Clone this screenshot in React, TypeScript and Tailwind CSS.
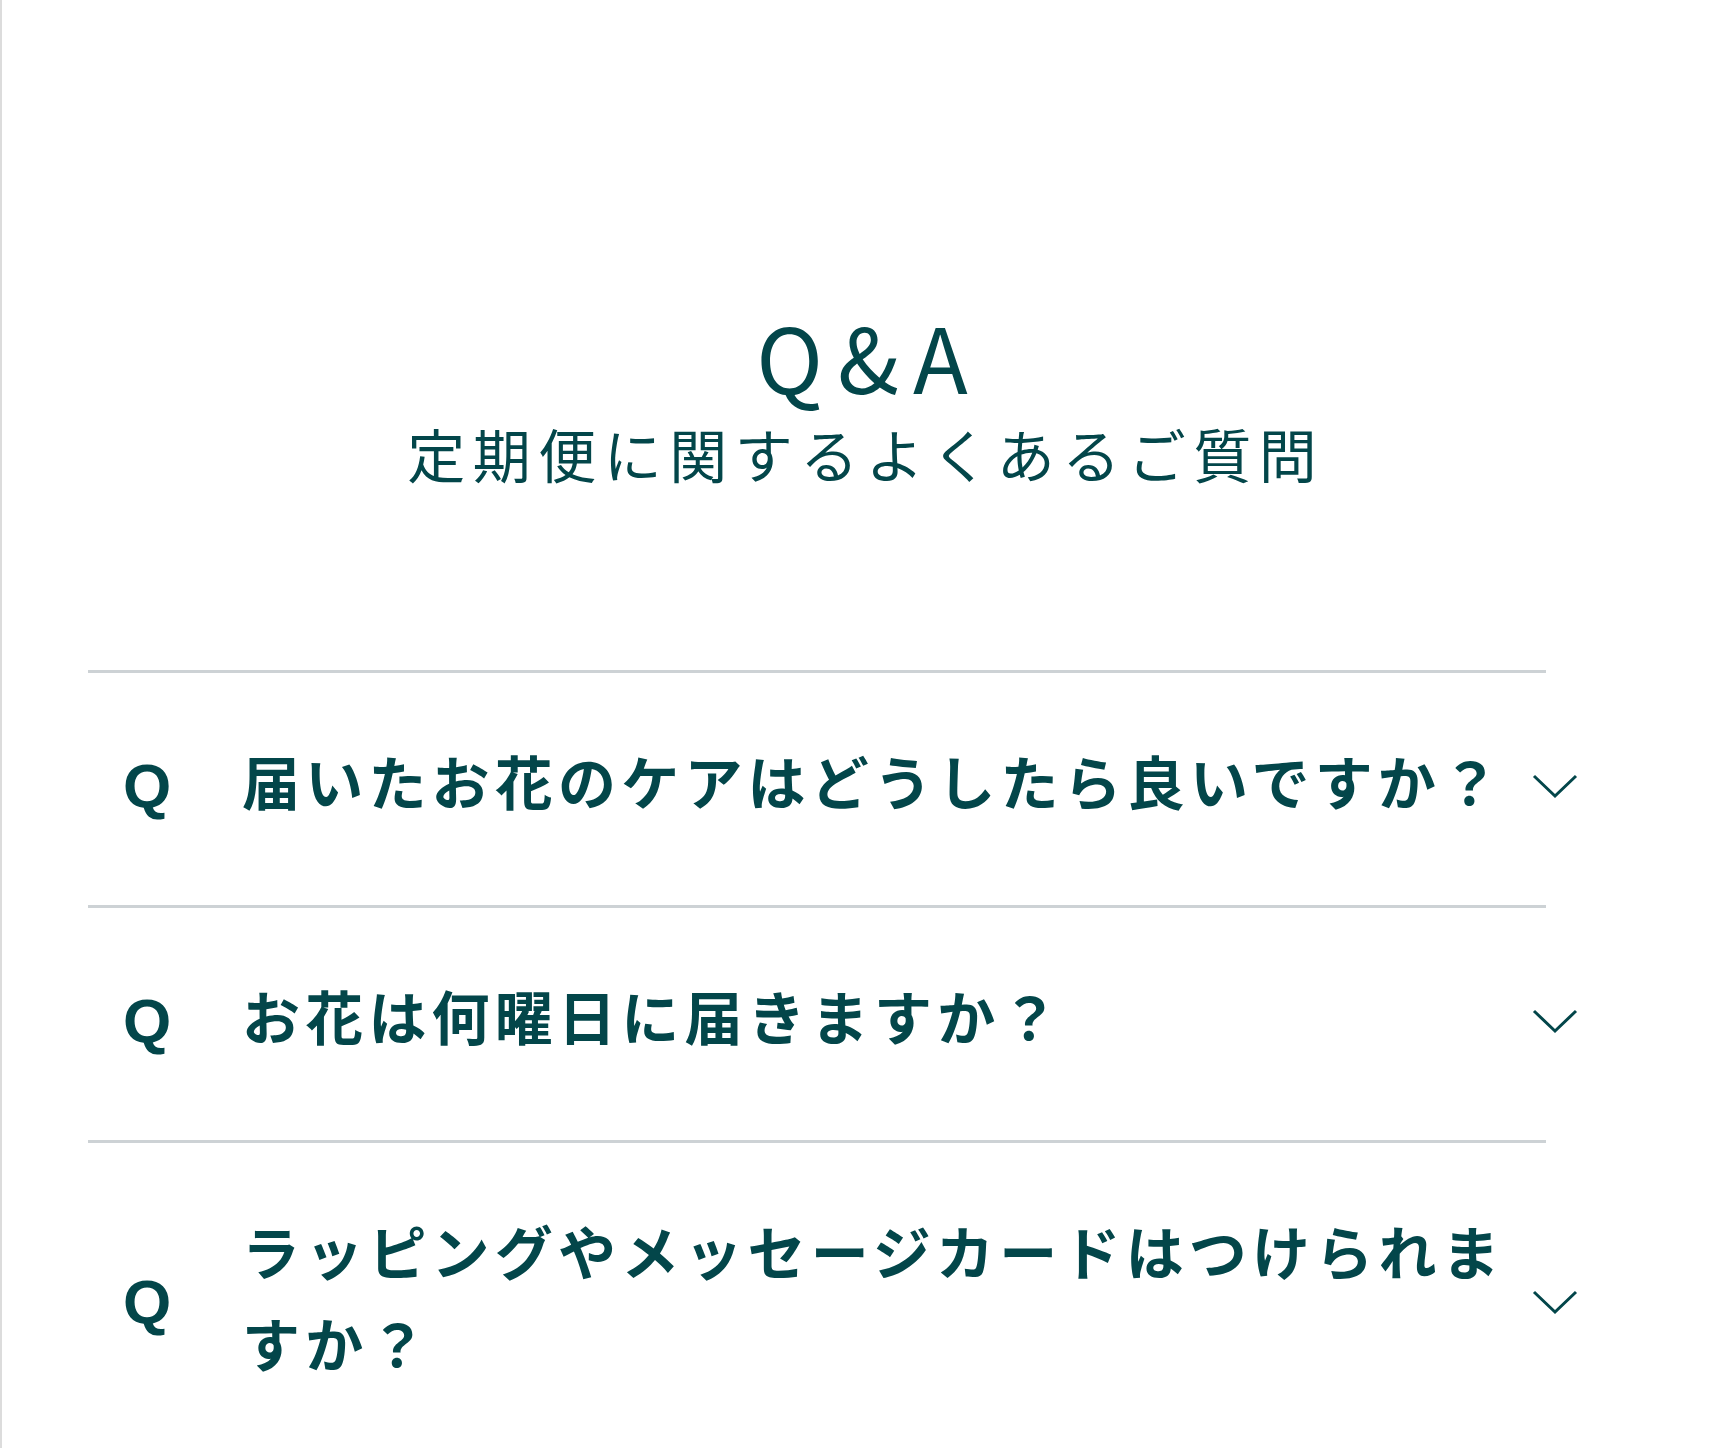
const faqs = [
  "届いたお花のケアはどうしたら良いですか？",
  "お花は何曜日に届きますか？",
  "ラッピングやメッセージカードはつけられますか？",
];

function Chevron() {
  return (
    <svg width="46" height="26" viewBox="0 0 46 26" fill="none" className="shrink-0">
      <polyline points="2,3 23,23 44,3" stroke="#03464a" strokeWidth="3" />
    </svg>
  );
}

export default function App() {
  return (
    <div className="min-h-screen bg-white border-l-2 border-[#dcdcdc] text-[#03464a] font-['Noto_Sans_CJK_JP',sans-serif] pt-[310px] overflow-hidden">
      <div className="flex flex-col items-center">
        <h2 className="text-[90px] leading-none font-normal tracking-[0.16em] pl-[0.16em]">Q&amp;A</h2>
        <p className="mt-[24px] text-[58px] leading-none font-normal tracking-[7.5px] pl-[7.5px]">
          定期便に関するよくあるご質問
        </p>
      </div>

      <div className="ml-[86px] w-[1458px] mt-[188px]">
        {faqs.map((q) => (
          <div key={q} className="border-t-3 border-[#cdd2d5] flex items-center pt-[67px] pb-[73px] pl-[35px]">
            <span className="w-[119px] shrink-0 text-[62px] leading-none font-bold font-['Liberation_Sans',sans-serif]">
              Q
            </span>
            <p className="relative -top-[6px] w-[1264px] shrink-0 text-[58px] leading-[92px] font-bold tracking-[5.2px]">
              {q}
            </p>
            <span className="ml-[26px]">
              <Chevron />
            </span>
          </div>
        ))}
      </div>
    </div>
  );
}
